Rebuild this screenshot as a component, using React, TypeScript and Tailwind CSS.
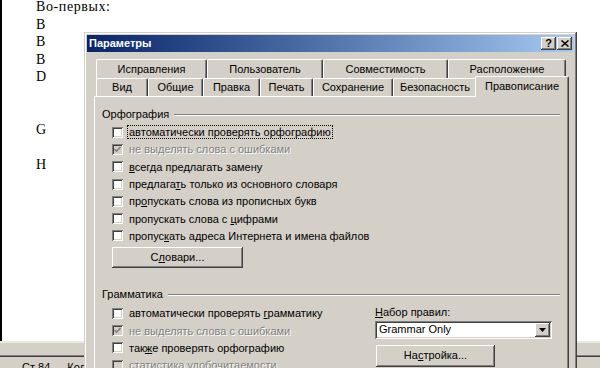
import type { ReactNode } from "react";

const docLines = ["Во-первых:", "B", "B", "B", "D", "", "", "G", "", "H"];

function CheckBox({ checked, disabled }: { checked?: boolean; disabled?: boolean }) {
  return (
    <span
      className={
        "mr-[4px] flex size-[11px] shrink-0 items-center justify-center shadow-[inset_1px_1px_0_#808080,inset_-1px_-1px_0_#fff,inset_2px_2px_0_#404040,inset_-2px_-2px_0_#d4d0c8] " +
        (disabled ? "bg-[#d4d0c8]" : "bg-white")
      }
    >
      {checked && (
        <svg width="7" height="7" viewBox="0 0 7 7">
          <polyline points="0.5,3 2.5,5.2 6.5,1" fill="none" stroke={disabled ? "#808080" : "#000"} strokeWidth="1.6" />
        </svg>
      )}
    </span>
  );
}

function Row({ children, checked, disabled, focus }: { children: ReactNode; checked?: boolean; disabled?: boolean; focus?: boolean }) {
  return (
    <div className="flex h-[17.3px] items-center">
      <CheckBox checked={checked} disabled={disabled} />
      <span
        className={
          "whitespace-nowrap border px-[1px] leading-[12px] " +
          (focus ? "border-dotted border-black " : "border-transparent ") +
          (disabled ? "text-[#808080] [text-shadow:1px_1px_0_#fff]" : "")
        }
      >
        {children}
      </span>
    </div>
  );
}

function Button({ children, className }: { children: ReactNode; className: string }) {
  return (
    <div
      className={
        "flex items-center justify-center bg-[#d4d0c8] shadow-[inset_-1px_-1px_0_#404040,inset_1px_1px_0_#fff,inset_-2px_-2px_0_#808080,inset_2px_2px_0_#d4d0c8] " +
        className
      }
    >
      {children}
    </div>
  );
}

function GroupHeader({ label, className }: { label: string; className: string }) {
  return (
    <div className={"flex h-[12px] items-center " + className}>
      <span>{label}</span>
      <div className="ml-[5px] h-[2px] flex-1 border-t border-b border-t-[#808080] border-b-white" />
    </div>
  );
}

function Tab({ label, className }: { label: string; className: string }) {
  return (
    <div
      className={
        "flex items-center justify-center whitespace-nowrap rounded-t-[2px] border-t border-l border-r border-white border-r-[#404040] shadow-[inset_-1px_0_0_#808080] " +
        className
      }
    >
      {label}
    </div>
  );
}

function U({ children }: { children: ReactNode }) {
  return <u className="underline underline-offset-[1px]">{children}</u>;
}

function Dialog() {
  return (
    <div className="absolute left-[84px] top-[32px] flex h-[345px] w-[493px] flex-col bg-[#d4d0c8] p-[3px] font-['Liberation_Sans',Arial,sans-serif] text-[11px] text-black shadow-[inset_-1px_-1px_0_#404040,inset_1px_1px_0_#d4d0c8,inset_-2px_-2px_0_#808080,inset_2px_2px_0_#fff]">
      <div className="flex h-[17px] items-center bg-linear-to-r from-[#0a246a] to-[#a6caf0] px-[2px]">
        <span className="font-bold text-white">Параметры</span>
        <div className="ml-auto flex gap-[1px]">
          <Button className="h-[13px] w-[15px] pt-[1px] font-bold leading-none">?</Button>
          <Button className="h-[13px] w-[15px]">
            <svg width="8" height="7" viewBox="0 0 8 7">
              <path d="M0.5 0.5 L7.5 6.5 M7.5 0.5 L0.5 6.5" stroke="#000" strokeWidth="1.5" />
            </svg>
          </Button>
        </div>
      </div>

      <div className="ml-[7px] mr-[5px] mt-[7px] flex flex-1 flex-col">
        <div className="flex h-[19px] pl-[2px]">
          <Tab label="Исправления" className="w-[111px] pt-[2px]" />
          <Tab label="Пользователь" className="w-[116px] pt-[2px]" />
          <Tab label="Совместимость" className="w-[125px] pt-[2px]" />
          <Tab label="Расположение" className="w-[118px] pt-[2px]" />
        </div>
        <div className="flex h-[18px] items-end pl-[2px]">
          <Tab label="Вид" className="h-[18px] w-[52px] pt-[1px]" />
          <Tab label="Общие" className="h-[18px] w-[55px] pt-[1px]" />
          <Tab label="Правка" className="h-[18px] w-[57px] pt-[1px]" />
          <Tab label="Печать" className="h-[18px] w-[53px] pt-[1px]" />
          <Tab label="Сохранение" className="h-[18px] w-[80px] pt-[1px]" />
          <Tab label="Безопасность" className="h-[18px] w-[84px] pt-[1px]" />
          <div className="relative z-10 -mb-[1px] -ml-[2px] flex h-[21px] w-[94px] items-center justify-center rounded-t-[2px] border-t border-l border-r border-white border-r-[#404040] bg-[#d4d0c8] shadow-[inset_-1px_0_0_#808080]">
            Правописание
          </div>
        </div>

        <div className="flex-1 border border-white border-r-[#404040] border-b-[#404040] pl-[7px] pr-[8px] shadow-[inset_-1px_-1px_0_#808080]">
          <GroupHeader label="Орфография" className="mt-[12px]" />
          <div className="ml-[10px] mt-[3px] flex flex-col">
            <Row focus>автоматически проверять орфографию</Row>
            <Row checked disabled>не выделять слова с ошибками</Row>
            <Row>
              <U>в</U>сегда предлагать замену
            </Row>
            <Row>
              предлага<U>т</U>ь только из основного словаря
            </Row>
            <Row>
              пр<U>о</U>пускать слова из прописных букв
            </Row>
            <Row>
              пропускать слова с <U>ц</U>ифрами
            </Row>
            <Row>
              пропус<U>к</U>ать адреса Интернета и имена файлов
            </Row>
            <Button className="mt-[2px] h-[21px] w-[131px]">
              <span>
                С<U>л</U>овари...
              </span>
            </Button>
          </div>

          <GroupHeader label="Грамматика" className="mt-[21px]" />
          <div className="mt-[4px] flex">
            <div className="ml-[10px] flex w-[263px] flex-col">
              <Row>
                автоматически проверять <U>г</U>рамматику
              </Row>
              <Row checked disabled>не выделять слова с ошибками</Row>
              <Row>
                так<U>ж</U>е проверять орфографию
              </Row>
              <Row disabled>статистика удобочитаемости</Row>
            </div>
            <div className="flex w-[177px] flex-col">
              <div className="flex h-[16px] items-center">
                <span>
                  <U>Н</U>абор правил:
                </span>
              </div>
              <div className="flex h-[18px] items-center bg-white p-[2px] shadow-[inset_1px_1px_0_#808080,inset_-1px_-1px_0_#fff,inset_2px_2px_0_#404040,inset_-2px_-2px_0_#d4d0c8]">
                <span className="flex-1 pl-[2px]">Grammar Only</span>
                <Button className="h-[14px] w-[15px]">
                  <svg width="7" height="4" viewBox="0 0 7 4">
                    <path d="M0 0 H7 L3.5 4 Z" fill="#000" />
                  </svg>
                </Button>
              </div>
              <Button className="ml-[1px] mt-[6px] h-[22px] w-[119px]">
                <span>
                  На<U>с</U>тройка...
                </span>
              </Button>
            </div>
          </div>
        </div>
      </div>
    </div>
  );
}

export default function App() {
  return (
    <div className="relative h-[368px] w-[600px] overflow-hidden bg-white">
      <div className="flex h-full flex-col">
        <div className="h-[341px] shrink-0 overflow-hidden border-l-2 border-black pl-[34px] font-['Liberation_Serif',serif] text-[14px] leading-[17.5px] tracking-[0.6px] text-black">
          <div className="-mt-[2px]">
            {docLines.map((line, i) => (
              <div key={i} className="h-[17.5px] whitespace-pre">
                {line}
              </div>
            ))}
          </div>
        </div>
        <div className="h-[2px] shrink-0 bg-[#ece9e4]" />
        <div className="h-[12px] shrink-0 bg-[#d4d0c8]" />
        <div className="h-[1px] shrink-0 bg-[#808080]" />
        <div className="h-[1px] shrink-0 bg-[#404040]" />
        <div className="flex min-h-0 flex-1 overflow-hidden bg-[#d4d0c8] pl-[22px] pt-[4px] font-['Liberation_Sans',Arial,sans-serif] text-[11px] leading-[13px] text-black">
          <span>Ст 84</span>
          <span className="ml-[17px]">Кол 1</span>
        </div>
      </div>
      <Dialog />
    </div>
  );
}
